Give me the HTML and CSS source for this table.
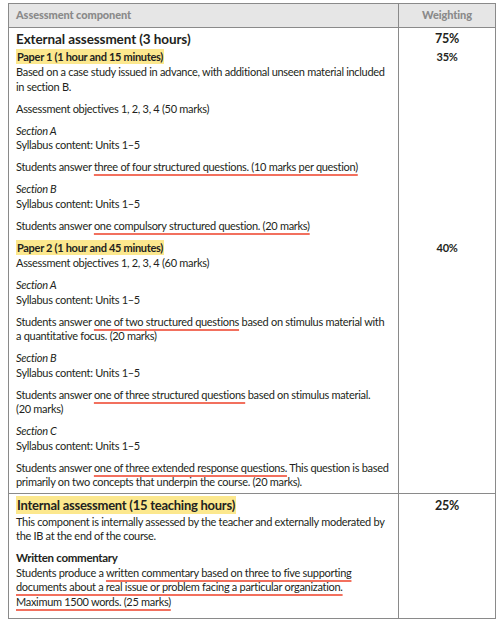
FILE: index.html
```html
<!DOCTYPE html>
<html>
<head>
<meta charset="utf-8">
<link rel="stylesheet" href="styles.css">
</head>
<body>
<table class="assess">
  <thead>
    <tr>
      <th class="col-main">Assessment component</th>
      <th class="col-weight">Weighting</th>
    </tr>
  </thead>
  <tbody>
    <tr class="sub first">
      <td class="col-main"><div class="ext-title">External assessment (3 hours)</div></td>
      <td class="col-weight"><div class="w-big">75%</div></td>
    </tr>
    <tr class="sub">
      <td class="col-main">
        <div class="paper"><span class="hl">Paper 1 (1 hour and 15 minutes)</span></div>
        <p>Based on a case study issued in advance, with additional unseen material included<br>in section B.</p>
        <p>Assessment objectives 1, 2, 3, 4 (50 marks)</p>
        <p><em>Section A</em><br>Syllabus content: Units 1–5</p>
        <p>Students answer <u>three of four structured questions. (10 marks per question)</u></p>
        <p><em>Section B</em><br>Syllabus content: Units 1–5</p>
        <p>Students answer <u>one compulsory structured question. (20 marks)</u></p>
      </td>
      <td class="col-weight"><div class="w-small">35%</div></td>
    </tr>
    <tr class="sub last">
      <td class="col-main">
        <div class="paper"><span class="hl">Paper 2 (1 hour and 45 minutes)</span></div>
        <p>Assessment objectives 1, 2, 3, 4 (60 marks)</p>
        <p><em>Section A</em><br>Syllabus content: Units 1–5</p>
        <p>Students answer <u>one of two structured questions</u> based on stimulus material with<br>a quantitative focus. (20 marks)</p>
        <p><em>Section B</em><br>Syllabus content: Units 1–5</p>
        <p>Students answer <u>one of three structured questions</u> based on stimulus material.<br>(20 marks)</p>
        <p><em>Section C</em><br>Syllabus content: Units 1–5</p>
        <p>Students answer <u>one of three extended response questions.</u> This question is based<br>primarily on two concepts that underpin the course. (20 marks).</p>
      </td>
      <td class="col-weight"><div class="w-small">40%</div></td>
    </tr>
    <tr class="internal">
      <td class="col-main">
        <div class="int-title"><span class="hl">Internal assessment (15 teaching hours)</span></div>
        <p>This component is internally assessed by the teacher and externally moderated by<br>the IB at the end of the course.</p>
        <p><strong>Written commentary</strong><br>Students produce a <u>written commentary based on three to five supporting<br>documents about a real issue or problem facing a particular organization.<br>Maximum 1500 words. (25 marks)</u></p>
      </td>
      <td class="col-weight"><div class="w-big">25%</div></td>
    </tr>
  </tbody>
</table>
</body>
</html>
```
FILE: styles.css
```css
html, body {
  background: #ffffff;
}
body {
  margin: 3px 4px 0 8px;
  font-family: "Lato", "Liberation Sans", sans-serif;
  color: #231f20;
  font-size: 11px;
  line-height: 14.5px;
  letter-spacing: -0.3px;
}
.assess {
  width: 488px;
  border-collapse: collapse;
  border: 1px solid #8a8a8a;
}
.assess th {
  background: #e6e6e6;
  color: #8a8a8a;
  font-weight: 900;
  font-size: 11px;
  height: 23px;
  padding: 0 7px;
  border: 1px solid #8a8a8a;
  text-align: left;
  letter-spacing: -0.1px;
}
.assess th.col-weight {
  text-align: center;
}
.col-main {
  width: 375px;
}
.assess td {
  vertical-align: top;
  padding: 0 7px;
}
.assess td.col-weight {
  border-left: 1px solid #8a8a8a;
  text-align: center;
  font-weight: 700;
}
.sub.first td {
  padding-top: 2px;
}
.sub.last td {
  padding-top: 6px;
  padding-bottom: 3px;
}
.internal td {
  border-top: 1px solid #8a8a8a;
  padding-top: 2px;
  padding-bottom: 9px;
}
.ext-title {
  font-size: 13.5px;
  font-weight: 700;
  line-height: 18px;
  letter-spacing: -0.1px;
}
.w-big {
  font-size: 12.5px;
  line-height: 18px;
}
.w-small {
  font-size: 11px;
  line-height: 17px;
}
.paper {
  font-weight: 700;
  line-height: 17px;
}
.int-title {
  font-size: 13px;
  font-weight: 700;
  line-height: 19px;
  letter-spacing: -0.25px;
}
.internal .w-big {
  line-height: 19px;
}
.hl {
  background: #fce88e;
  padding: 1px 1px;
}
p {
  margin: 0 0 7.5px 0;
}
td p:last-child {
  margin-bottom: 0;
}
u {
  text-decoration: underline;
  text-decoration-color: #f2705e;
  text-decoration-thickness: 1.5px;
  text-underline-offset: 2.5px;
}
em {
  font-style: italic;
}
strong {
  font-weight: 700;
  font-size: 11.5px;
}
```
